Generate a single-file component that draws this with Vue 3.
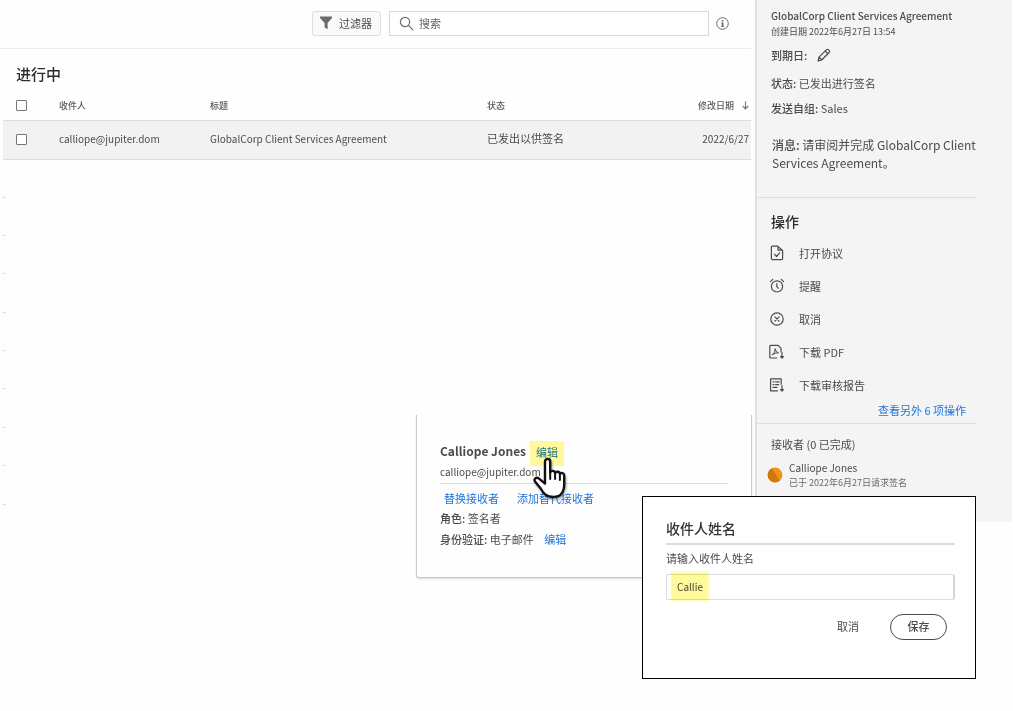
<script setup>
import { ref } from 'vue'

const search = ref('')
const recipientName = ref('Callie')
const rowMarks = 9

const agreements = ref([
  {
    email: 'calliope@jupiter.dom',
    title: 'GlobalCorp Client Services Agreement',
    status: '已发出以供签名',
    modified: '2022/6/27',
    selected: false
  }
])

const actions = [
  { icon: 'open', label: '打开协议' },
  { icon: 'remind', label: '提醒' },
  { icon: 'cancel', label: '取消' },
  { icon: 'pdf', label: '下载 PDF' },
  { icon: 'report', label: '下载审核报告' }
]
</script>

<template>
  <div class="page">
    <main class="manage">
      <header class="toolbar">
        <button class="filter" type="button">
          <svg width="14" height="14" viewBox="0 0 14 14" aria-hidden="true">
            <path d="M1 0.5h12v1.6L8.6 7v6.2L5.6 11.6V7L1 2.1z" fill="#6a6a6a" />
          </svg>
          过滤器
        </button>
        <div class="search">
          <svg width="15" height="15" viewBox="0 0 15 15" fill="none" stroke="#6a6a6a" stroke-width="1.2" aria-hidden="true">
            <circle cx="6" cy="6" r="4.6" />
            <path d="M9.4 9.4l4.4 4.4" stroke-linecap="round" />
          </svg>
          <input v-model="search" type="text" aria-label="搜索" placeholder="搜索" />
        </div>
        <button class="info" type="button" aria-label="信息">
          <svg width="13" height="13" viewBox="0 0 13 13" aria-hidden="true">
            <circle cx="6.5" cy="6.5" r="5.8" fill="none" stroke="#6a6a6a" />
            <path d="M5.7 3h1.700v1.600H5.700zM5.200 5.600h2.200v3.200h.8v1H5v-1h.8V6.500h-.6z" fill="#6a6a6a" />
          </svg>
        </button>
      </header>

      <h1 class="heading">进行中</h1>

      <table class="agreements">
        <colgroup>
          <col class="c-check" />
          <col class="c-recipient" />
          <col class="c-title" />
          <col />
          <col class="c-date" />
        </colgroup>
        <thead>
          <tr>
            <th class="check"><input type="checkbox" aria-label="全选" /></th>
            <th>收件人</th>
            <th>标题</th>
            <th>状态</th>
            <th class="date">
              <span class="sort">
                修改日期
                <svg width="7" height="9" viewBox="0 0 7 9" fill="none" stroke="#777" stroke-width="1.2" aria-hidden="true">
                  <path d="M3.5 0.5v7M0.8 5l2.7 2.8L6.2 5" />
                </svg>
              </span>
            </th>
          </tr>
        </thead>
        <tbody>
          <tr v-for="row in agreements" :key="row.title">
            <td class="check"><input v-model="row.selected" type="checkbox" :aria-label="row.title" /></td>
            <td>{{ row.email }}</td>
            <td>{{ row.title }}</td>
            <td class="status">{{ row.status }}</td>
            <td class="date">{{ row.modified }}</td>
          </tr>
        </tbody>
      </table>

      <div class="marks" aria-hidden="true"><i v-for="n in rowMarks" :key="n"></i></div>
    </main>

    <aside class="details">
      <section class="summary">
        <h2>GlobalCorp Client Services Agreement</h2>
        <p class="created">创建日期 2022年6月27日 13:54</p>
        <p class="due">
          <b>到期日:</b>
          <button type="button" aria-label="编辑到期日">
            <svg width="14" height="14" viewBox="0 0 14 14" fill="none" stroke="#444" stroke-width="1.1" stroke-linejoin="round" aria-hidden="true">
              <path d="M1 13l1-3.800 7.400-7.400q1-1 2-.2l.9.9q.8 1-.2 2L4.700 12zM8.200 3l2.800 2.800M2 9.200L4.700 12" />
            </svg>
          </button>
        </p>
        <p class="state"><b>状态:</b> 已发出进行签名</p>
        <p class="group"><b>发送自组:</b> Sales</p>
        <p class="message"><b>消息:</b> 请审阅并完成 GlobalCorp Client Services Agreement。</p>
      </section>

      <section class="actions">
        <h3>操作</h3>
        <ul>
          <li v-for="action in actions" :key="action.icon">
            <button type="button">
              <svg width="16" height="16" viewBox="0 0 16 16" fill="none" stroke="#4b4b4b" stroke-width="1.2" stroke-linejoin="round" stroke-linecap="round" aria-hidden="true">
                <g v-if="action.icon === 'open'">
                  <path d="M8.6 1.2H3.400q-1 0-1 1v11.400q0 1 1 1h9.200q1 0 1-1V5.400zM9 1.400v3.800h4.400" />
                  <path d="M5.6 9.300l2 2.200L10.600 7.800" />
                </g>
                <g v-else-if="action.icon === 'remind'">
                  <circle cx="8" cy="8.4" r="5.6" />
                  <path d="M7.800 5.600v3l1.600 1.500M1.400 3.600l2.300-2.200M14.600 3.600l-2.300-2.200" />
                </g>
                <g v-else-if="action.icon === 'cancel'">
                  <circle cx="8" cy="8" r="6.2" />
                  <path d="M5.900 5.900l4.200 4.200M10.100 5.900l-4.200 4.200" />
                </g>
                <g v-else-if="action.icon === 'pdf'">
                  <path d="M7.800 14H1.800q-1 0-1-1V2.400q0-1 1-1h7.400l2.800 3v3.400" />
                  <path d="M3.400 10.600Q6.500 8.800 6.200 4.600Q6.600 8.400 9.600 8.800Q6 8.600 3.400 10.600" stroke-width="1" />
                  <path d="M13 8.600v5.200M11.600 12.600l1.400 1.600 1.400-1.600z" />
                </g>
                <g v-else>
                  <path d="M8.600 13.800H1.600V1.800h10.600v5.400" />
                  <path d="M4 4.800h1M6.600 4.800h3.600M4 7.600h1M6.600 7.600h3.200M4 10.400h4" />
                  <path d="M13 8.600v5.200M11.600 12.600l1.400 1.600 1.400-1.600z" />
                </g>
              </svg>
              {{ action.label }}
            </button>
          </li>
        </ul>
        <a class="more" href="#">查看另外 6 项操作</a>
      </section>

      <section class="recipients">
        <h4>接收者 (0 已完成)</h4>
        <div class="person">
          <svg width="16" height="16" viewBox="0 0 16 16" aria-hidden="true">
            <circle cx="8" cy="8" r="7.4" fill="#f29413" />
            <path d="M5 1.200L12.600 13.800A7.400 7.400 0 1 1 5 1.200z" fill="#d0760f" />
          </svg>
          <div>
            <p class="name">Calliope Jones</p>
            <p class="when">已于 2022年6月27日请求签名</p>
          </div>
        </div>
      </section>
    </aside>

    <section class="card">
      <div class="card-head">
        <h2>Calliope Jones</h2>
        <button class="edit-name" type="button">
          编辑
          <svg class="cursor" width="36" height="44" viewBox="0 0 36 44" aria-hidden="true">
            <path d="M13 4.500c0-3.400 5.200-3.400 5.200 0v11c.6-2.300 4.600-2.200 4.900.5.8-2 4.600-1.700 4.800.9 1.200-1.700 4.300-1 4.300 1.500v8.600c0 7-3 13-10.500 13-8 0-10.500-4-13-8.500L3 24.500c-1.600-3 1.600-5 4-2.900l6 5z" fill="#fff" stroke="#111" stroke-width="2.4" stroke-linejoin="round" />
            <path d="M18.200 14v8M23.100 16v6M27.900 17v6" fill="none" stroke="#111" stroke-width="2" stroke-linecap="round" />
          </svg>
        </button>
      </div>
      <p class="mail">calliope@jupiter.dom</p>
      <div class="card-links">
        <a href="#">替换接收者</a>
        <a href="#">添加替代接收者</a>
      </div>
      <p class="fact"><b>角色:</b> 签名者</p>
      <p class="fact"><b>身份验证:</b> 电子邮件 <a href="#">编辑</a></p>
    </section>

    <form class="dialog" role="dialog" aria-labelledby="dialog-title" @submit.prevent>
      <h2 id="dialog-title">收件人姓名</h2>
      <label for="recipient-name">请输入收件人姓名</label>
      <div class="field">
        <input id="recipient-name" v-model="recipientName" type="text" />
        <span class="glow" aria-hidden="true"></span>
      </div>
      <div class="buttons">
        <button class="plain" type="button">取消</button>
        <button class="save" type="submit">保存</button>
      </div>
    </form>
  </div>
</template>

<style>
body {
  background: #fefefe;
}
</style>

<style scoped>
* {
  box-sizing: border-box;
}

.page {
  position: relative;
  display: grid;
  grid-template-columns: minmax(0, 1fr) 257px;
  column-gap: 4px;
  align-items: start;
  min-height: 100vh;
  padding-right: 1px;
  font-family: "Noto Sans CJK SC", sans-serif;
  font-size: 11px;
  line-height: 16px;
  color: #4b4b4b;
}

h1, h2, h3, h4, p, ul {
  margin: 0;
  padding: 0;
}

b {
  font-weight: 500;
}

button, input {
  font: inherit;
  color: inherit;
}

button {
  padding: 0;
  border: 0;
  background: none;
}

svg {
  display: block;
  flex: none;
}

a {
  color: #1f74d8;
  text-decoration: none;
}

.toolbar {
  display: flex;
  justify-content: flex-end;
  align-items: center;
  gap: 8px;
  height: 49px;
  padding: 0 22px 2px 0;
  border-bottom: 1px solid #ececec;
}

.filter {
  display: flex;
  align-items: center;
  gap: 6px;
  height: 25px;
  padding: 0 8px 0 6px;
  border: 1px solid #dedede;
  border-radius: 3px;
  background: #fafafa;
}

.search {
  display: flex;
  align-items: center;
  gap: 5px;
  width: 320px;
  height: 25px;
  padding: 0 9px;
  border: 1px solid #d8d8d8;
  background: #fff;
}

.search input {
  flex: 1;
  min-width: 0;
  padding: 0;
  border: 0;
  outline: 0;
  background: none;
}

.search input::placeholder {
  color: #666;
  opacity: 1;
}

.info {
  margin-left: -1px;
}

.heading {
  padding: 14px 0 8px 16px;
  font-size: 15px;
  font-weight: 500;
  line-height: 21px;
  color: #2c2c2c;
}

.agreements {
  width: calc(100% - 3px);
  margin-left: 3px;
  border-collapse: collapse;
  table-layout: fixed;
}

.c-check {
  width: 56px;
}

.c-recipient {
  width: 151px;
}

.c-title {
  width: 277px;
}

.c-date {
  width: 70px;
}

th, td {
  padding: 0;
  text-align: left;
  white-space: nowrap;
}

th {
  height: 28px;
  font-size: 9px;
  font-weight: 500;
  color: #5a5a5a;
}

td {
  height: 39px;
  padding-bottom: 1px;
  border-top: 1px solid #dcdcdc;
  border-bottom: 1px solid #dcdcdc;
  background: #f2f2f2;
  font-size: 10px;
}

.status {
  padding-bottom: 3px;
  font-size: 11px;
}

.check {
  padding-left: 13px;
}

.check input {
  display: block;
  appearance: none;
  width: 11px;
  height: 11px;
  margin: 0;
  border: 1px solid #777;
  border-radius: 1px;
  background: #fff;
}

.date {
  padding-right: 2px;
  text-align: right;
}

.sort {
  display: flex;
  justify-content: flex-end;
  align-items: center;
  gap: 8px;
}

.marks {
  display: flex;
  flex-direction: column;
  justify-content: space-between;
  height: 308px;
  margin: 37px 0 0 3px;
}

.marks i {
  width: 3px;
  height: 1px;
  background: #dadada;
}

.details {
  min-height: 522px;
  padding: 8px 36px 32px 0;
  border-left: 2px solid #e0e0e0;
  background: #f4f4f4;
}

.summary {
  padding: 0 0 25px 14px;
  border-bottom: 1px solid #dedede;
}

.summary h2 {
  font-size: 10px;
  font-weight: 500;
  line-height: 16px;
  white-space: nowrap;
}

.created {
  font-size: 9px;
}

.due {
  display: flex;
  align-items: center;
  gap: 10px;
  padding-top: 7px;
}

.state {
  padding-top: 12px;
}

.group {
  padding-top: 9px;
}

.message {
  padding: 20px 0 0 1px;
  font-size: 12px;
  line-height: 18px;
}

.actions {
  padding: 11px 10px 5px 12px;
  border-bottom: 1px solid #dedede;
}

.actions h3 {
  padding-left: 2px;
  font-size: 14px;
  font-weight: 500;
  line-height: 24px;
  color: #2c2c2c;
}

.actions ul {
  padding-top: 4px;
  list-style: none;
}

.actions li button {
  display: flex;
  align-items: center;
  gap: 14px;
  width: 100%;
  height: 33px;
  padding-bottom: 1px;
  text-align: left;
}

.more {
  display: block;
  text-align: right;
}

.recipients {
  padding: 12px 0 0 10px;
}

.recipients h4 {
  padding-left: 4px;
  font-size: 11px;
  font-weight: 400;
}

.person {
  display: flex;
  align-items: center;
  gap: 6px;
  padding-top: 8px;
  line-height: 15px;
}

.name {
  font-size: 10px;
}

.when {
  font-size: 9px;
  color: #6a6a6a;
  white-space: nowrap;
}

.card {
  position: absolute;
  top: 415px;
  right: 261px;
  width: 336px;
  padding: 26px 23px 28px;
  border: 1px solid #c9c9c9;
  border-top: 0;
  border-radius: 0 0 3px 3px;
  background: #fefefe;
  box-shadow: 0 1px 2px #ddd;
}

.card-head {
  display: flex;
  align-items: flex-start;
  gap: 4px;
  height: 25px;
}

.card-head h2 {
  font-size: 12px;
  font-weight: 700;
  line-height: 20px;
}

.edit-name {
  position: relative;
  height: 25px;
  padding: 0 6px 4px;
  background: #fff99b;
  color: #1d7383;
  line-height: 20px;
}

.cursor {
  position: absolute;
  top: 16px;
  left: 2px;
  z-index: 1;
  filter: drop-shadow(1px 2px 1px #0005);
}

.mail {
  height: 18px;
  font-size: 10px;
  line-height: 12px;
  border-bottom: 1px solid #dcdcdc;
}

.card-links {
  display: flex;
  gap: 18px;
  padding: 6px 4px 1px;
}

.fact {
  padding: 3px 0 2px;
}

.fact a {
  margin-left: 8px;
}

.dialog {
  position: absolute;
  top: 496px;
  right: 37px;
  width: 334px;
  padding: 20px 20px 38px 23px;
  border: 1px solid #000;
  background: #fff;
}

.dialog h2 {
  padding-bottom: 4px;
  border-bottom: 2px solid #dcdcdc;
  font-size: 14px;
  font-weight: 500;
  line-height: 22px;
  color: #333;
}

.dialog label {
  display: block;
  padding: 5px 0 8px;
}

.field {
  position: relative;
}

.field input {
  display: block;
  width: 100%;
  height: 26px;
  padding: 0 10px 2px;
  border: 1px solid #dcdce6;
  border-right: 2px solid #d4d4e2;
  border-radius: 2px;
  outline: 0;
  font-size: 10px;
}

.glow {
  position: absolute;
  top: -2px;
  left: 5px;
  width: 38px;
  height: 29px;
  background: #fffa9b;
  mix-blend-mode: multiply;
  pointer-events: none;
  filter: blur(1px);
}

.buttons {
  display: flex;
  justify-content: flex-end;
  align-items: center;
  gap: 31px;
  padding: 14px 8px 0 0;
}

.plain {
  padding-bottom: 2px;
}

.save {
  width: 57px;
  height: 26px;
  padding-bottom: 2px;
  border: 1px solid #4b4b4b;
  border-radius: 13px;
  font-weight: 500;
}
</style>
